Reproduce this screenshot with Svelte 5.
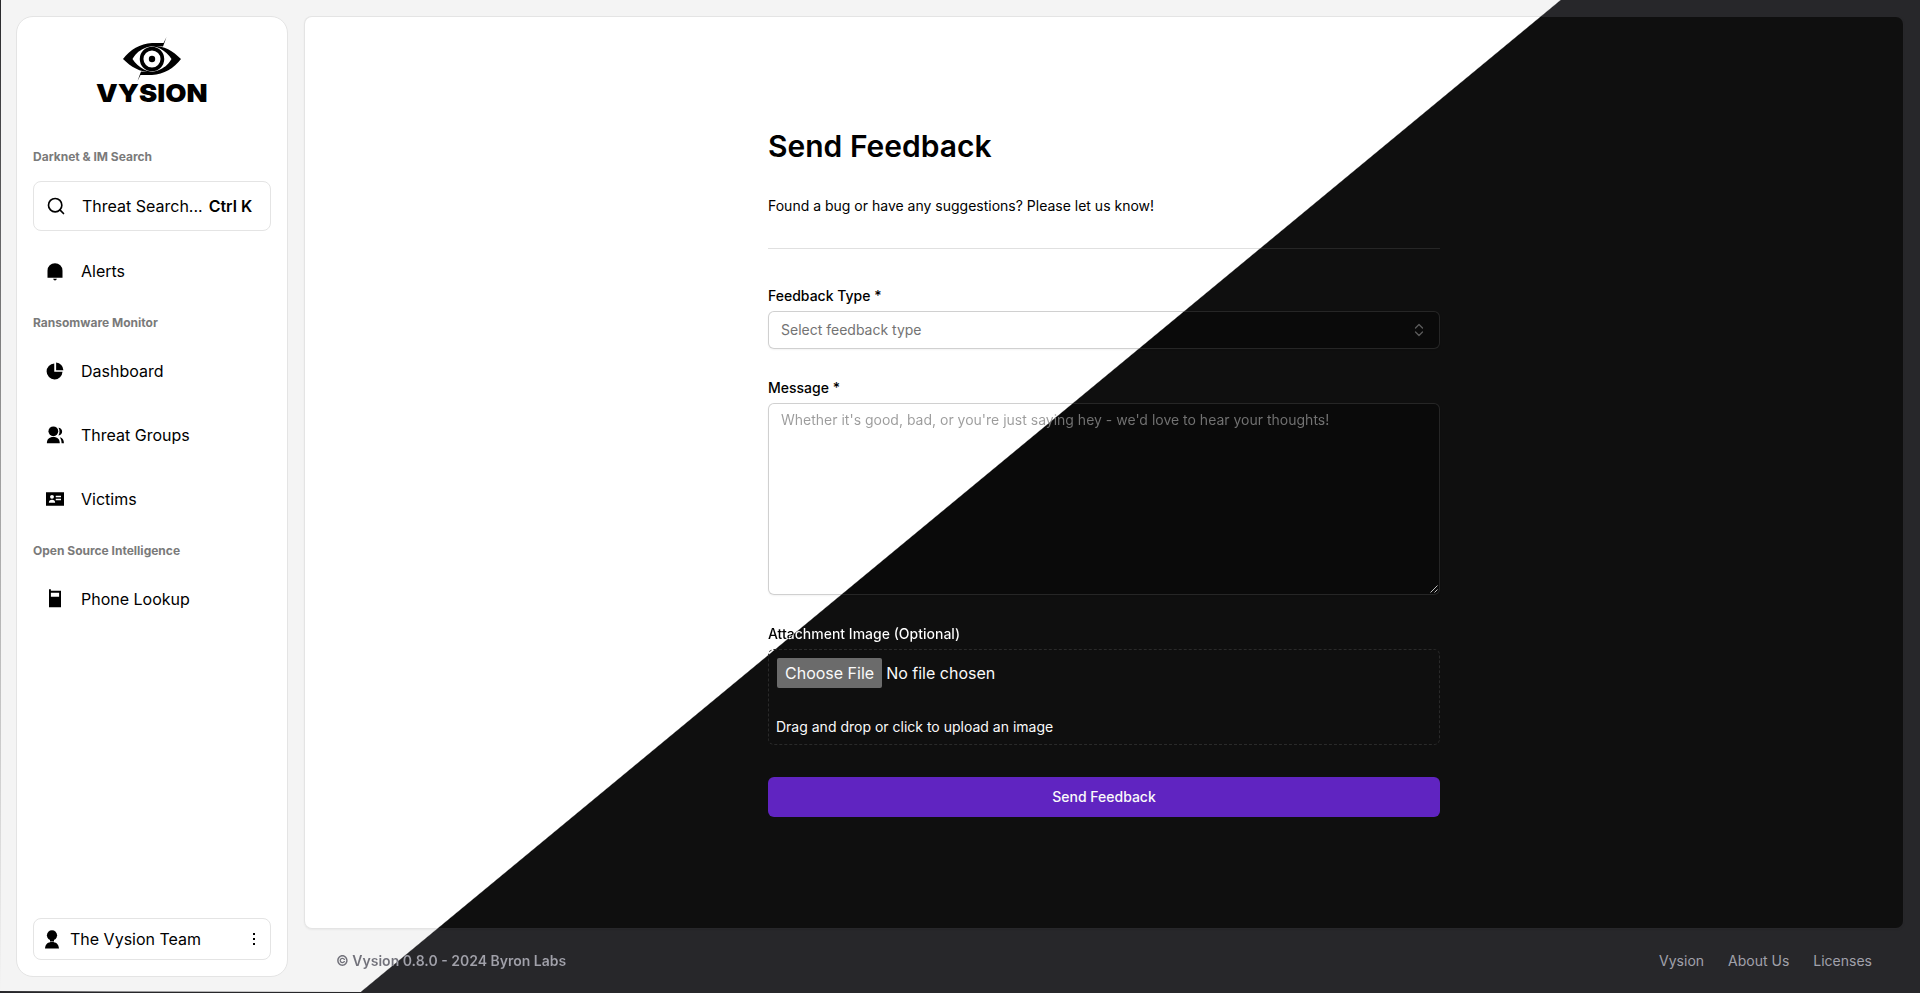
<script>
  const groups = [
    { title: 'Ransomware Monitor', items: [['pie', 'Dashboard'], ['group', 'Threat Groups'], ['card', 'Victims']] },
    { title: 'Open Source Intelligence', items: [['phone', 'Phone Lookup']] }
  ];
  const links = ['Vysion', 'About Us', 'Licenses'];
  const lens = 'M29 22C36 13 46 6.500 58 6L69.500 6 72.500 0 69 9.500C60 9 54 9 50 11.500 44 14 41 18 38.500 22 41 26.500 45 29.500 50 32.500 54 34.500 58 35 62 35 48 36.500 38 31 29 22z';
</script>

{#snippet icon(name)}
  <svg class="icon" viewBox="0 0 24 24" fill="currentColor">
    {#if name === 'bell'}
      <path d="M12 1.500a10 10 0 0 1 10 10V21H2v-9.500a10 10 0 0 1 10-10zM9.500 22.300h5q-.6 2.200-2.500 2.200t-2.500-2.200z" />
    {:else if name === 'pie'}
      <path d="M11 2v11h11A10.600 10.600 0 1 1 11 2z" /><path d="M13.500.8A10.300 10.300 0 0 1 23.200 11H13.500z" />
    {:else if name === 'group'}
      <circle cx="9.800" cy="7" r="6.500" />
      <path d="M1.200 23c0-5.500 2.700-8.500 8.600-8.500s8.600 3 8.600 8.500zM16.500 12.700c2-3.300 2-7.500.1-10.500 5.900.3 7.300 8.800-.1 10.500zM18.500 15c3.700.9 5.400 3.900 5.400 8h-3.100c-.1-3.200-.8-5.500-2.300-8z" />
    {:else if name === 'card'}
      <path fill-rule="evenodd" d="M0 3h24v18H0zM8 6.500a2.600 2.600 0 1 0 0 5.200 2.600 2.600 0 0 0 0-5.200zM3.800 17h8.400c0-2.700-1.500-4-4.200-4s-4.200 1.300-4.200 4zM13 7.500v2h7v-2zm0 4v2h7v-2z" />
    {:else}
      <path fill-rule="evenodd" d="M4-1h2.500V1H20v22H4zM6.500 3.500V9h11V3.500z" />
    {/if}
  </svg>
{/snippet}

<div class="page">
  <aside class="sidebar">
    <svg class="logo" width="116" height="76" viewBox="0 0 116 76">
      <path d={lens} />
      <path d={lens} transform="rotate(180 58 22)" />
      <circle cx="58" cy="22" r="10.400" fill="#fff" stroke="#000" stroke-width="3.700" />
      <circle cx="58" cy="22" r="3.200" />
      <text x="2" y="65" textLength="111.500" lengthAdjust="spacingAndGlyphs">VYSION</text>
    </svg>

    <h2>Darknet &amp; IM Search</h2>
    <div class="search">
      <svg width="20" height="20" viewBox="0 0 24 24" fill="none" stroke="currentColor" stroke-width="2" stroke-linecap="round"><circle cx="11" cy="11" r="8" /><path d="m21 21-4.300-4.300" /></svg>
      <span>Threat Search...</span><b>Ctrl K</b>
    </div>
    <div class="item">{@render icon('bell')}<span>Alerts</span></div>
    {#each groups as g}
      <h2>{g.title}</h2>
      {#each g.items as [name, label]}
        <div class="item">{@render icon(name)}<span>{label}</span></div>
      {/each}
    {/each}

    <div class="user">
      <svg width="14" height="19" viewBox="0 0 14 19"><circle cx="7" cy="5.300" r="5.100" /><path d="M5 10h4v1.500H5zM0 18.500c.4-4.500 3-6.500 7-6.500s6.600 2 7 6.500z" /></svg>
      <span>The Vysion Team</span>
      <svg width="4" height="14" viewBox="0 0 4 14"><path d="M1 1h2v2H1zM1 6h2v2H1zM1 11h2v2H1z" /></svg>
    </div>
  </aside>

  <div class="content">
    <main class="panel">
      <form class="form">
        <h1>Send Feedback</h1>
        <p class="intro">Found a bug or have any suggestions? Please let us know!</p>
        <div class="rule"></div>

        <div class="label">Feedback Type *</div>
        <div class="field select">
          <span>Select feedback type</span>
          <svg width="16" height="16" viewBox="0 0 16 16" fill="none" stroke="#5c5c5c" stroke-width="1.300" stroke-linecap="round" stroke-linejoin="round"><path d="M4.500 6 8 2.500 11.500 6M4.500 10 8 13.500 11.500 10" /></svg>
        </div>

        <div class="label">Message *</div>
        <div class="field message">
          <span class="hint">Whether it's good, bad, or you're just saying hey - we'd love to hear your thoughts!</span>
          <svg class="grip" width="8" height="8" viewBox="0 0 8 8" stroke="#bdbdbd" stroke-width="1"><path d="M.5 7.500l7-7M4.500 7.500l3-3" /></svg>
        </div>

        <div class="label cross">Attachment Image (Optional)</div>
        <div class="drop">
          <div class="file"><span class="choose">Choose File</span><span>No file chosen</span></div>
          <p>Drag and drop or click to upload an image</p>
        </div>

        <button type="button">Send Feedback</button>
      </form>
    </main>
    <footer>
      <span class="copy">© Vysion 0.8.0 - 2024 Byron Labs</span>
      <nav>{#each links as l}<span>{l}</span>{/each}</nav>
    </footer>
  </div>
  <div class="edge-left"></div>
  <div class="edge-bottom"></div>
</div>

<style>
  :global(body) { overflow: hidden; }
  .page, .page * { box-sizing: border-box; }
  .page {
    --a: 140.42deg;
    --from: calc(50% - 0.5px);
    --to: calc(50% + 0.6px);
    position: relative;
    display: flex;
    gap: 16px;
    width: 1920px;
    height: 993px;
    padding: 16px 16px 0;
    font: 16px/24px Inter, sans-serif;
    color: #000;
    background: linear-gradient(var(--a), #f4f4f4 var(--from), #27272a var(--to)) fixed;
  }
  h1, h2, p { margin: 0; }

  .sidebar {
    display: flex;
    flex-direction: column;
    width: 272px;
    height: 961px;
    padding: 20px 16px 16px;
    border: 1px solid #e4e4e4;
    border-radius: 17px;
    background: #fff;
  }
  .logo { flex: none; align-self: center; margin-bottom: 24px; }
  .logo text { font: 900 24.8px Inter, sans-serif; }
  h2 { height: 36px; padding-top: 12px; font-size: 12px; line-height: 16px; font-weight: 700; color: #7a7a7a; }
  .search {
    display: flex;
    align-items: center;
    height: 50px;
    margin: 8px 0;
    padding: 0 12px;
    border: 1px solid #e4e4e4;
    border-radius: 8px;
  }
  .search span { margin-left: 16px; }
  .search b { margin-left: 6px; font-weight: 600; }
  .item { display: flex; align-items: center; gap: 17px; height: 64px; padding-left: 13px; }
  .icon { width: 18px; height: 18px; overflow: visible; }
  .user {
    display: flex;
    align-items: center;
    height: 42px;
    margin-top: auto;
    padding: 0 14px 0 11px;
    border: 1px solid #e4e4e4;
    border-radius: 8px;
  }
  .user span { flex: 1; margin-left: 11px; }

  .content { width: 1600px; }
  .panel {
    display: flex;
    justify-content: center;
    height: 913px;
    padding-top: 111px;
    border: 1px solid transparent;
    border-radius: 8px;
    background:
      linear-gradient(var(--a), #fff var(--from), #0f0f0f var(--to)) fixed padding-box,
      linear-gradient(var(--a), #e4e4e4 var(--from), #27272a var(--to)) fixed border-box;
    box-shadow: 0 1px 2px rgba(0, 0, 0, .05);
  }
  .form { display: flex; flex-direction: column; width: 672px; font-size: 14px; line-height: 20px; }
  h1 { font-size: 30px; line-height: 36px; font-weight: 600; }
  .intro { margin-top: 32px; }
  .rule {
    height: 1px;
    margin: 32px 0 37px;
    background: linear-gradient(var(--a), #e0e0e0 var(--from), #262626 var(--to)) fixed;
  }
  .label { height: 25px; font-weight: 500; }
  .cross {
    color: transparent;
    background: linear-gradient(var(--a), #000 var(--from), #fff var(--to)) fixed text;
  }
  .field {
    position: relative;
    display: flex;
    padding: 0 12px;
    border: 1px solid transparent;
    border-radius: 6px;
    background:
      linear-gradient(var(--a), #fff var(--from), #0a0a0a var(--to)) fixed padding-box,
      linear-gradient(var(--a), #d0d0d0 var(--from), #262626 var(--to)) fixed border-box;
    box-shadow: 0 1px 2px rgba(0, 0, 0, .05);
  }
  .select { align-items: center; justify-content: space-between; height: 38px; margin-bottom: 29px; color: #737373; }
  .message { height: 192px; margin-bottom: 29px; padding-top: 6px; }
  .hint {
    height: 20px;
    color: transparent;
    background: linear-gradient(var(--a), #9c9c9c var(--from), #737373 var(--to)) fixed text;
  }
  .grip { position: absolute; right: 1px; bottom: 1px; }
  .drop { height: 96px; padding: 8px 7px; border: 1px dashed #2a2a2a; border-radius: 6px; color: #fafafa; }
  .file { display: flex; align-items: center; gap: 4px; font-size: 16px; line-height: 30px; padding-left: 1px; }
  .choose { padding: 0 8px; border-radius: 2px; background: #6b6b6b; }
  .drop p { margin-top: 29px; }
  button {
    height: 40px;
    margin-top: 32px;
    border: 0;
    border-radius: 6px;
    font: 500 14px/20px Inter, sans-serif;
    color: #fafafa;
    background: #6024c1;
  }

  footer { display: flex; align-items: center; justify-content: space-between; height: 64px; padding: 0 32px; font-size: 14px; line-height: 20px; }
  .copy {
    font-weight: 600;
    color: transparent;
    background: linear-gradient(var(--a), #71717a var(--from), #a1a1aa var(--to)) fixed text;
  }
  nav { display: flex; gap: 24px; color: #a1a1aa; }
  .edge-left { position: absolute; left: 0; top: 0; width: 1px; height: 991px; background: linear-gradient(#27272a, #9a9a9a 45%, #f4f4f4); }
  .edge-bottom {
    position: absolute;
    left: 0;
    bottom: 0;
    width: 361px;
    height: 2px;
    border-bottom: 1px solid #27272a;
    background: linear-gradient(90deg, #27272a, #8a8a8c 30%, #f4f4f4);
  }
</style>
